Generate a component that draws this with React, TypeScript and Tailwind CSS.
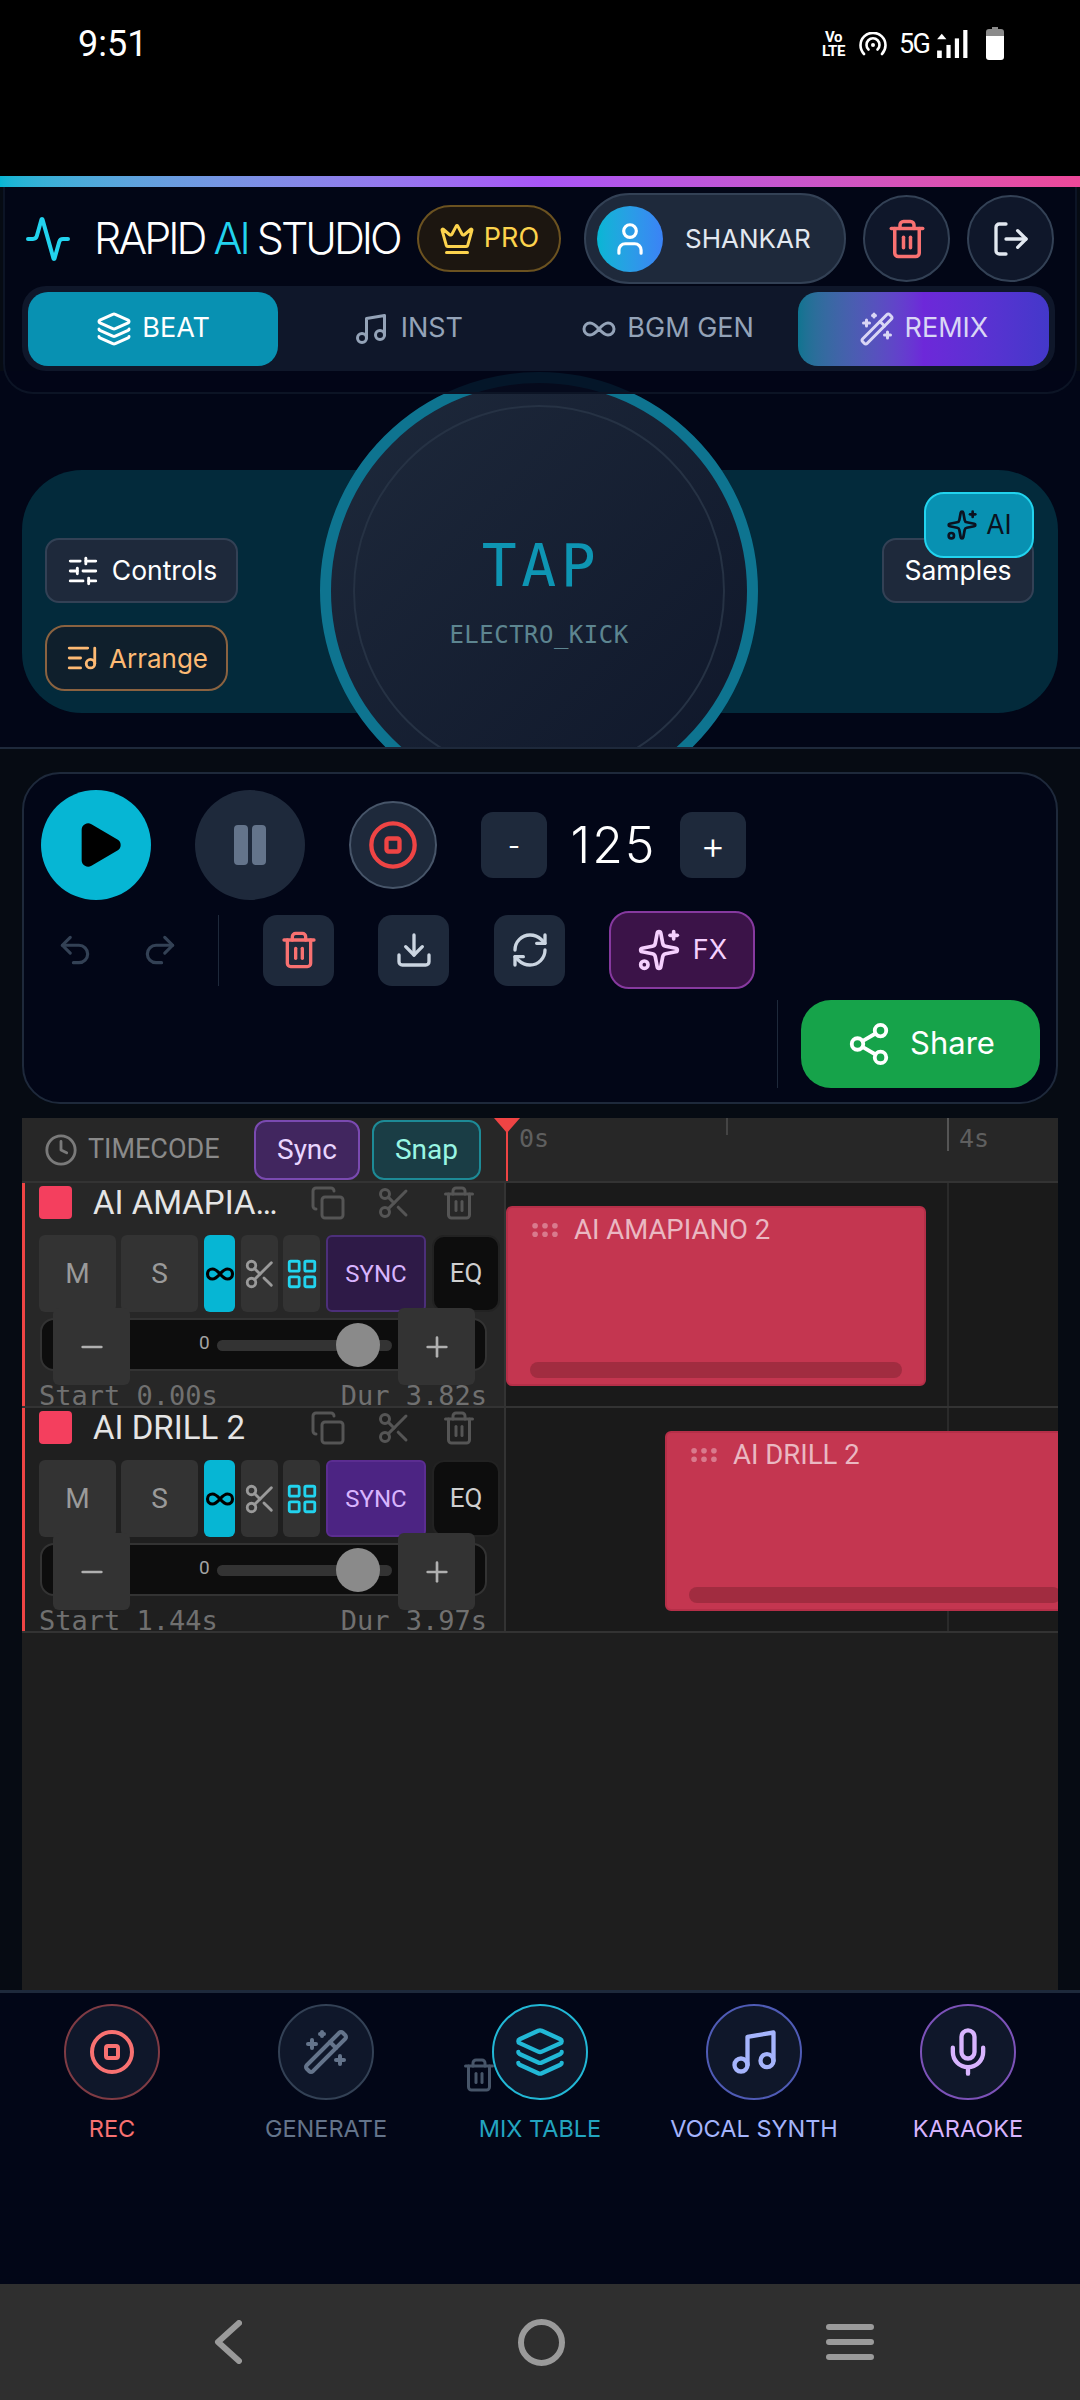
import React from 'react';
import {
  Activity,
  Clock,
  Copy,
  Crown,
  Download,
  GripHorizontal,
  Infinity as InfinityIcon,
  Layers,
  LayoutGrid,
  ListMusic,
  LogOut,
  Mic,
  Minus,
  Music,
  Pause,
  Play,
  Plus,
  Redo2,
  RefreshCw,
  Scissors,
  Share2,
  SlidersHorizontal,
  Sparkles,
  CircleStop,
  Trash2,
  Undo2,
  User,
  WandSparkles,
} from 'lucide-react';

const StatusBar = () => (
  <div className="h-[176px] bg-black font-['Roboto',sans-serif] text-white">
    <div className="flex items-start justify-between pl-[78px] pr-[76px] pt-[22px]">
      <span className="text-[36px] leading-[44px]">9:51</span>
      <div className="flex items-center mt-[5px]">
        <div className="flex flex-col items-center text-[15px] leading-[14px] font-bold w-[27px] tracking-tight">
          <span>Vo</span>
          <span>LTE</span>
        </div>
        <svg width="28" height="24" viewBox="0 0 28 24" fill="none" stroke="white" strokeWidth="2.6" strokeLinecap="round" className="ml-[12px]">
          <path d="M5 22A12.5 12.5 0 1 1 23 22" />
          <path d="M9.5 17.5A6.5 6.5 0 1 1 18.5 17.5" />
          <circle cx="14" cy="13" r="2" fill="white" stroke="none" />
        </svg>
        <span className="ml-[12px] w-[28px] text-[27px] leading-[30px] tracking-[-0.06em]">5G</span>
        <svg width="33" height="28" viewBox="0 0 33 30" fill="white" className="ml-[9px]">
          <path d="M0 10L5 4L10 10Z" />
          <rect x="0" y="22" width="5" height="8" />
          <rect x="10" y="16" width="4.5" height="14" />
          <rect x="19" y="9" width="4.5" height="21" />
          <rect x="28" y="0" width="4.5" height="30" />
        </svg>
        <svg width="18" height="33" viewBox="0 0 18 33" className="ml-[17px]">
          <path d="M6 0H12V2H15A3 3 0 0 1 18 5V9H0V5A3 3 0 0 1 3 2H6Z" fill="#8a8a8a" />
          <path d="M0 9H18V30A3 3 0 0 1 15 33H3A3 3 0 0 1 0 30Z" fill="white" />
        </svg>
      </div>
    </div>
  </div>
);

const Header = () => (
  <div className="relative z-10 h-[207px] mx-[3px] rounded-b-[30px] border-b-2 border-x-2 border-[#0c1425] bg-[#020617]/85 font-['Inter',sans-serif]">
    <div className="flex items-center h-[91px] mt-[6px] pl-[19px]">
      <Activity className="w-[48px] h-[48px] text-[#22d3ee] shrink-0" strokeWidth={2} />
      <div className="w-[345px] pl-[22px] shrink-0 text-[43px] leading-none font-light tracking-[-0.07em] text-white whitespace-nowrap">
        RAPID <span className="text-[#22d3ee]">AI</span> STUDIO
      </div>
      <div className="w-[144px] h-[67px] rounded-full border-2 border-[#6b5220] bg-[#1c1610] flex items-center justify-center gap-[9px] text-[#fcd34d] text-[27px] shrink-0">
        <Crown className="w-[36px] h-[36px]" />
        <span>PRO</span>
      </div>
      <div className="ml-[23px] w-[262px] h-[91px] rounded-full border-2 border-[#334155] bg-[#1e293b] flex items-center pl-[11px] shrink-0">
        <div className="w-[66px] h-[66px] rounded-full bg-gradient-to-r from-[#06b6d4] to-[#3b82f6] flex items-center justify-center">
          <User className="w-[38px] h-[38px] text-white" />
        </div>
        <span className="ml-[22px] text-[26px] text-[#e2e8f0]">SHANKAR</span>
      </div>
      <div className="ml-[17px] w-[87px] h-[87px] rounded-full border-2 border-[#334155] bg-[#0f172a] flex items-center justify-center shrink-0">
        <Trash2 className="w-[42px] h-[42px] text-[#f87171]" />
      </div>
      <div className="ml-[17px] w-[87px] h-[87px] rounded-full border-2 border-[#334155] bg-[#0f172a] flex items-center justify-center shrink-0">
        <LogOut className="w-[40px] h-[40px] text-[#e2e8f0]" />
      </div>
    </div>
    <div className="ml-[17px] mt-[2px] w-[1033px] h-[85px] rounded-[24px] bg-[#0f172a] flex items-center px-[6px] text-[27px]">
      <div className="w-[251px] h-[74px] rounded-[20px] bg-[#0891b2] flex items-center justify-center gap-[10px] text-white">
        <Layers className="w-[36px] h-[36px]" />
        <span>BEAT</span>
      </div>
      <div className="w-[260px] flex items-center justify-center gap-[12px] text-[#94a3b8]">
        <Music className="w-[36px] h-[36px]" />
        <span>INST</span>
      </div>
      <div className="w-[261px] flex items-center justify-center gap-[10px] text-[#94a3b8]">
        <InfinityIcon className="w-[36px] h-[36px]" />
        <span>BGM GEN</span>
      </div>
      <div className="w-[252px] h-[74px] rounded-[20px] bg-gradient-to-r from-[#0e7490] via-[#6d28d9] to-[#4338ca] flex items-center justify-center gap-[10px] text-[#d9d6f5]">
        <WandSparkles className="w-[36px] h-[36px]" />
        <span>REMIX</span>
      </div>
    </div>
  </div>
);

const TapPad = () => (
  <div className="relative -mt-[23px] h-[376px] overflow-hidden bg-[#020617] font-['Inter',sans-serif]">
    <div className="mx-[22px] mt-[99px] h-[243px] rounded-[60px] bg-[#032a3b] flex justify-between pl-[23px] pr-[24px] pt-[68px] text-[26.5px] text-white">
      <div className="flex flex-col items-start gap-[22px]">
        <div className="w-[193px] h-[65px] rounded-[14px] border-2 border-[#334155] bg-[#1e293b] flex items-center justify-center gap-[12px]">
          <SlidersHorizontal className="w-[34px] h-[34px]" />
          <span>Controls</span>
        </div>
        <div className="w-[183px] h-[66px] rounded-[20px] border-2 border-[#8a6240] bg-[#0f1f2c] flex items-center justify-center gap-[10px] text-[26px] text-[#fdba74]">
          <ListMusic className="w-[34px] h-[34px]" />
          <span>Arrange</span>
        </div>
      </div>
      <div className="relative">
        <div className="w-[152px] h-[65px] rounded-[14px] border-2 border-[#334155] bg-[#1e293b] flex items-center justify-center">
          <span>Samples</span>
        </div>
        <div className="absolute z-20 right-0 -top-[46px] w-[110px] h-[66px] rounded-[20px] border-2 border-[#22d3ee] bg-[#0891b2] flex items-center justify-center gap-[8px] text-[#0b1220]">
          <Sparkles className="w-[32px] h-[32px]" />
          <span>AI</span>
        </div>
      </div>
    </div>
    <div className="absolute left-[320px] top-[1px] w-[438px] h-[438px] rounded-full border-[11px] border-[#0e7490] bg-gradient-to-br from-[#1e293b] to-[#0f172a] flex items-center justify-center">
      <div className="w-[372px] h-[372px] rounded-full border-2 border-[#263244] flex flex-col items-center justify-center font-['DejaVu_Sans_Mono',monospace]">
        <span className="text-[58px] leading-[64px] tracking-[0.08em] text-[#0e95b3] pl-[4px]">TAP</span>
        <span className="mt-[23px] text-[24px] leading-[28px] tracking-[0.02em] text-[#5d8590]">ELECTRO_KICK</span>
      </div>
    </div>
  </div>
);

const IconTile = ({ children }: { children: React.ReactNode }) => (
  <div className="w-[71px] h-[71px] rounded-[14px] bg-[#1e293b] flex items-center justify-center">{children}</div>
);

const Transport = () => (
  <div className="mx-[22px] mt-[23px] h-[332px] rounded-[38px] border-2 border-[#1e293b] bg-[#020617] font-['Inter',sans-serif] text-white">
    <div className="flex items-center pl-[17px] pt-[16px]">
      <div className="w-[110px] h-[110px] rounded-full bg-[#06b6d4] flex items-center justify-center pl-[6px]">
        <Play className="w-[52px] h-[52px] text-black" fill="black" />
      </div>
      <div className="ml-[44px] w-[110px] h-[110px] rounded-full bg-[#1e293b] flex items-center justify-center">
        <Pause className="w-[48px] h-[48px] text-[#64748b]" fill="#64748b" />
      </div>
      <div className="ml-[44px] w-[88px] h-[88px] rounded-full border-2 border-[#475569] bg-[#1e293b] flex items-center justify-center">
        <CircleStop className="w-[52px] h-[52px] text-[#ef4444]" />
      </div>
      <div className="ml-[44px] w-[66px] h-[66px] rounded-[12px] bg-[#1e293b] flex items-center justify-center text-[26px]">-</div>
      <div className="w-[133px] text-center text-[50px] leading-none font-light tracking-[0.04em]">125</div>
      <div className="w-[66px] h-[66px] rounded-[12px] bg-[#1e293b] flex items-center justify-center text-[38px] font-light">+</div>
    </div>
    <div className="flex items-center mt-[11px] h-[78px] pl-[32px]">
      <Undo2 className="w-[38px] h-[38px] text-[#334155]" />
      <Redo2 className="ml-[47px] w-[38px] h-[38px] text-[#334155]" />
      <div className="ml-[39px] w-[1px] h-[71px] bg-[#1e293b]" />
      <div className="ml-[44px]"><IconTile><Trash2 className="w-[40px] h-[40px] text-[#f87171]" /></IconTile></div>
      <div className="ml-[44px]"><IconTile><Download className="w-[40px] h-[40px] text-[#cbd5e1]" /></IconTile></div>
      <div className="ml-[45px]"><IconTile><RefreshCw className="w-[40px] h-[40px] text-[#cbd5e1]" /></IconTile></div>
      <div className="ml-[44px] w-[146px] h-[78px] rounded-[20px] border-2 border-[#86399f] bg-[#3b1348] flex items-center justify-center gap-[12px] text-[27px] text-[#f5d0fe]">
        <Sparkles className="w-[44px] h-[44px]" />
        <span>FX</span>
      </div>
    </div>
    <div className="flex justify-end items-center mt-[11px] pr-[16px]">
      <div className="w-[1px] h-[88px] bg-[#1e293b]" />
      <div className="ml-[23px] w-[239px] h-[88px] rounded-[30px] bg-[#16a34a] flex items-center justify-center gap-[18px] text-[31px]">
        <Share2 className="w-[46px] h-[46px]" />
        <span className="-mt-[2px]">Share</span>
      </div>
    </div>
  </div>
);

type TrackProps = {
  name: string;
  start: string;
  dur: string;
  clipLeft: number;
  clipWidth: number;
  selected?: boolean;
};

const Track = ({ name, start, dur, clipLeft, clipWidth, selected }: TrackProps) => (
  <div className={`flex h-[225px] border-b-2 border-[#333333] ${selected ? 'bg-[#272727]' : 'bg-[#1f1f1f]'}`}>
    <div className="w-[484px] shrink-0 border-l-[3px] border-r-2 border-l-[#ef4444] border-r-[#333333] pl-[14px] pr-[3px] pt-[3px]">
      <div className="flex items-center h-[33px]">
        <div className="w-[33px] h-[33px] rounded-[4px] bg-[#f43f5e]" />
        <div className="ml-[21px] w-[187px] truncate text-[33px] leading-[40px] text-[#e5e5e5]">{name}</div>
        <Copy className="ml-[30px] w-[36px] h-[36px] text-[#555555] shrink-0" />
        <Scissors className="ml-[30px] w-[36px] h-[36px] text-[#555555] shrink-0" />
        <Trash2 className="ml-[29px] w-[36px] h-[36px] text-[#555555] shrink-0" />
      </div>
      <div className="flex h-[77px] mt-[16px] text-[#9a9a9a]">
        <div className="w-[77px] rounded-[6px] bg-[#333333] flex items-center justify-center text-[28px]">M</div>
        <div className="ml-[5px] w-[77px] rounded-[6px] bg-[#333333] flex items-center justify-center text-[28px]">S</div>
        <div className="ml-[6px] w-[31px] rounded-[6px] bg-[#06b6d4] flex items-center justify-center">
          <InfinityIcon className="w-[30px] h-[30px] text-black shrink-0" strokeWidth={2.5} />
        </div>
        <div className="ml-[6px] w-[37px] rounded-[6px] bg-[#333333] flex items-center justify-center">
          <Scissors className="w-[34px] h-[34px] shrink-0" />
        </div>
        <div className="ml-[5px] w-[37px] rounded-[6px] bg-[#333333] flex items-center justify-center">
          <LayoutGrid className="w-[34px] h-[34px] text-[#22d3ee] shrink-0" />
        </div>
        <div className={`ml-[6px] w-[100px] rounded-[6px] border-2 flex items-center justify-center text-[24px] text-[#d8b4fe] ${selected ? 'border-[#4c2f7a] bg-[#2e1a47]' : 'border-[#5b2d91] bg-[#4c2483]'}`}>SYNC</div>
        <div className="ml-[6px] w-[68px] rounded-[12px] border-2 border-[#222222] bg-[#0d0d0d] flex items-center justify-center text-[26px] text-[#cfcfcf]">EQ</div>
      </div>
      <div className="relative ml-[1px] mt-[6px] w-[447px] h-[53px] rounded-[14px] border-2 border-[#333333] bg-[#0d0d0d]">
        <div className="absolute left-[11px] -top-[12px] w-[77px] h-[77px] rounded-[6px] bg-[#333333] flex items-center justify-center">
          <Minus className="w-[32px] h-[32px] text-[#b0b0b0]" />
        </div>
        <span className="absolute left-[157px] top-[7px] text-[19px] leading-[32px] text-[#a3a3a3]">0</span>
        <div className="absolute left-[175px] top-[20px] w-[175px] h-[11px] rounded-full bg-[#333333]" />
        <div className="absolute left-[294px] top-[3px] w-[44px] h-[44px] rounded-full bg-[#8a8a8a]" />
        <div className="absolute left-[356px] -top-[12px] w-[77px] h-[77px] rounded-[6px] bg-[#333333] flex items-center justify-center">
          <Plus className="w-[32px] h-[32px] text-[#b0b0b0]" />
        </div>
      </div>
      <div className="flex justify-between mt-[11px] pr-[14px] font-['DejaVu_Sans_Mono',monospace] text-[27px] leading-[28px] text-[#707070] whitespace-nowrap">
        <span>Start {start}</span>
        <span>Dur {dur}</span>
      </div>
    </div>
    <div className="relative flex-1 overflow-hidden bg-[#1a1a1a]">
      <div className="absolute top-0 bottom-0 left-[441px] w-[2px] bg-[#2a2a2a]" />
      <div
        className="absolute top-[23px] h-[180px] rounded-[6px] border-2 border-[#b52f48] bg-[#c43650]"
        style={{ left: clipLeft, width: clipWidth }}
      >
        <div className="flex items-center pl-[20px] pt-[5px] gap-[12px] text-[27.5px] leading-[34px] text-[#eab8c2]">
          <GripHorizontal className="w-[34px] h-[34px] text-[#d97a8d]" />
          <span>{name}</span>
        </div>
        <div className="absolute left-[22px] right-[22px] bottom-[6px] h-[16px] rounded-full bg-[#a12c40]" />
      </div>
    </div>
  </div>
);

const Timeline = () => (
  <div className="mx-[22px] mt-[14px] h-[872px] bg-[#1e1e1e] font-['Roboto',sans-serif]">
    <div className="relative flex h-[65px] border-b-2 border-[#333333] bg-[#272727]">
      <div className="w-[484px] shrink-0 flex items-center pl-[22px]">
        <Clock className="w-[34px] h-[34px] text-[#7a7a7a]" />
        <span className="ml-[10px] w-[166px] text-[27px] text-[#8a8a8a]">TIMECODE</span>
        <div className="w-[106px] h-[60px] rounded-[12px] border-2 border-[#7a4ab0] bg-[#41265f] flex items-center justify-center text-[28px] text-[#e9d5ff]">Sync</div>
        <div className="ml-[12px] w-[109px] h-[60px] rounded-[12px] border-2 border-[#1d8a96] bg-[#1a3d45] flex items-center justify-center text-[28px] text-[#99f6e4]">Snap</div>
      </div>
      <div className="relative flex-1">
        <div className="absolute left-[0px] top-0 w-[2px] h-[63px] bg-[#ef4444]" />
        <div className="absolute -left-[12px] top-0 w-0 h-0 border-l-[13px] border-r-[13px] border-t-[15px] border-l-transparent border-r-transparent border-t-[#ef4444]" />
        <span className="absolute left-[13px] top-[2px] font-['DejaVu_Sans_Mono',monospace] text-[25px] text-[#5f5f5f]">0s</span>
        <div className="absolute left-[220px] top-0 w-[2px] h-[17px] bg-[#444444]" />
        <div className="absolute left-[441px] top-0 w-[2px] h-[33px] bg-[#555555]" />
        <span className="absolute left-[453px] top-[2px] font-['DejaVu_Sans_Mono',monospace] text-[25px] text-[#5f5f5f]">4s</span>
      </div>
    </div>
    <Track name="AI AMAPIANO 2" start="0.00s" dur="3.82s" clipLeft={0} clipWidth={420} selected />
    <Track name="AI DRILL 2" start="1.44s" dur="3.97s" clipLeft={159} clipWidth={420} />
  </div>
);

const navItems = [
  { label: 'REC', Icon: CircleStop, ring: 'border-[#7f3b44]', icon: 'w-[48px] h-[48px] text-[#f87171]', text: 'text-[#f87171]' },
  { label: 'GENERATE', Icon: WandSparkles, ring: 'border-[#334155]', icon: 'w-[48px] h-[48px] text-[#64748b]', text: 'text-[#64748b]' },
  { label: 'MIX TABLE', Icon: Layers, ring: 'border-[#22b8d6]', icon: 'w-[52px] h-[52px] text-[#22b8d6]', text: 'text-[#22a5c0]' },
  { label: 'VOCAL SYNTH', Icon: Music, ring: 'border-[#4f5bb5]', icon: 'w-[52px] h-[52px] text-[#a5b4fc]', text: 'text-[#a5b4fc]' },
  { label: 'KARAOKE', Icon: Mic, ring: 'border-[#7c52b8]', icon: 'w-[52px] h-[52px] text-[#d8b4fe]', text: 'text-[#d8b4fe]' },
];

const BottomNav = () => (
  <div className="relative h-[294px] border-t-[3px] border-[#1e293b] bg-[#020617] grid grid-cols-5 px-[5px] pt-[11px] font-['Inter',sans-serif]">
    {navItems.map(({ label, Icon, ring, icon, text }) => (
      <div key={label} className="flex flex-col items-center">
        <div className={`w-[96px] h-[96px] rounded-full border-2 bg-[#0f172a] flex items-center justify-center ${ring}`}>
          <Icon className={icon} />
        </div>
        <span className={`mt-[15px] text-[23.5px] leading-[28px] whitespace-nowrap ${text}`}>{label}</span>
      </div>
    ))}
    <Trash2 className="absolute left-[461px] top-[62px] w-[36px] h-[40px] text-[#475569]" />
  </div>
);

const SystemNav = () => (
  <div className="h-[116px] bg-[#2f2f2f] flex items-center pl-[214px]">
    <svg width="28" height="44" viewBox="0 0 28 44" fill="none" stroke="#9a9a9a" strokeWidth="6" strokeLinecap="round" strokeLinejoin="round">
      <path d="M25 3L4 22L25 41" />
    </svg>
    <div className="ml-[276px] w-[47px] h-[47px] rounded-full border-[6px] border-[#9a9a9a]" />
    <div className="ml-[261px] flex flex-col gap-[9px]">
      <div className="w-[48px] h-[6px] rounded-full bg-[#9a9a9a]" />
      <div className="w-[48px] h-[6px] rounded-full bg-[#9a9a9a]" />
      <div className="w-[48px] h-[6px] rounded-full bg-[#9a9a9a]" />
    </div>
  </div>
);

export default function App() {
  return (
    <div className="w-[1080px] h-[2400px] overflow-hidden bg-[#060b13] flex flex-col">
      <StatusBar />
      <div className="h-[11px] bg-gradient-to-r from-[#06b6d4] via-[#a855f7] to-[#ec4899]" />
      <Header />
      <TapPad />
      <div className="h-[2px] bg-[#1e293b]" />
      <Transport />
      <Timeline />
      <BottomNav />
      <SystemNav />
    </div>
  );
}
